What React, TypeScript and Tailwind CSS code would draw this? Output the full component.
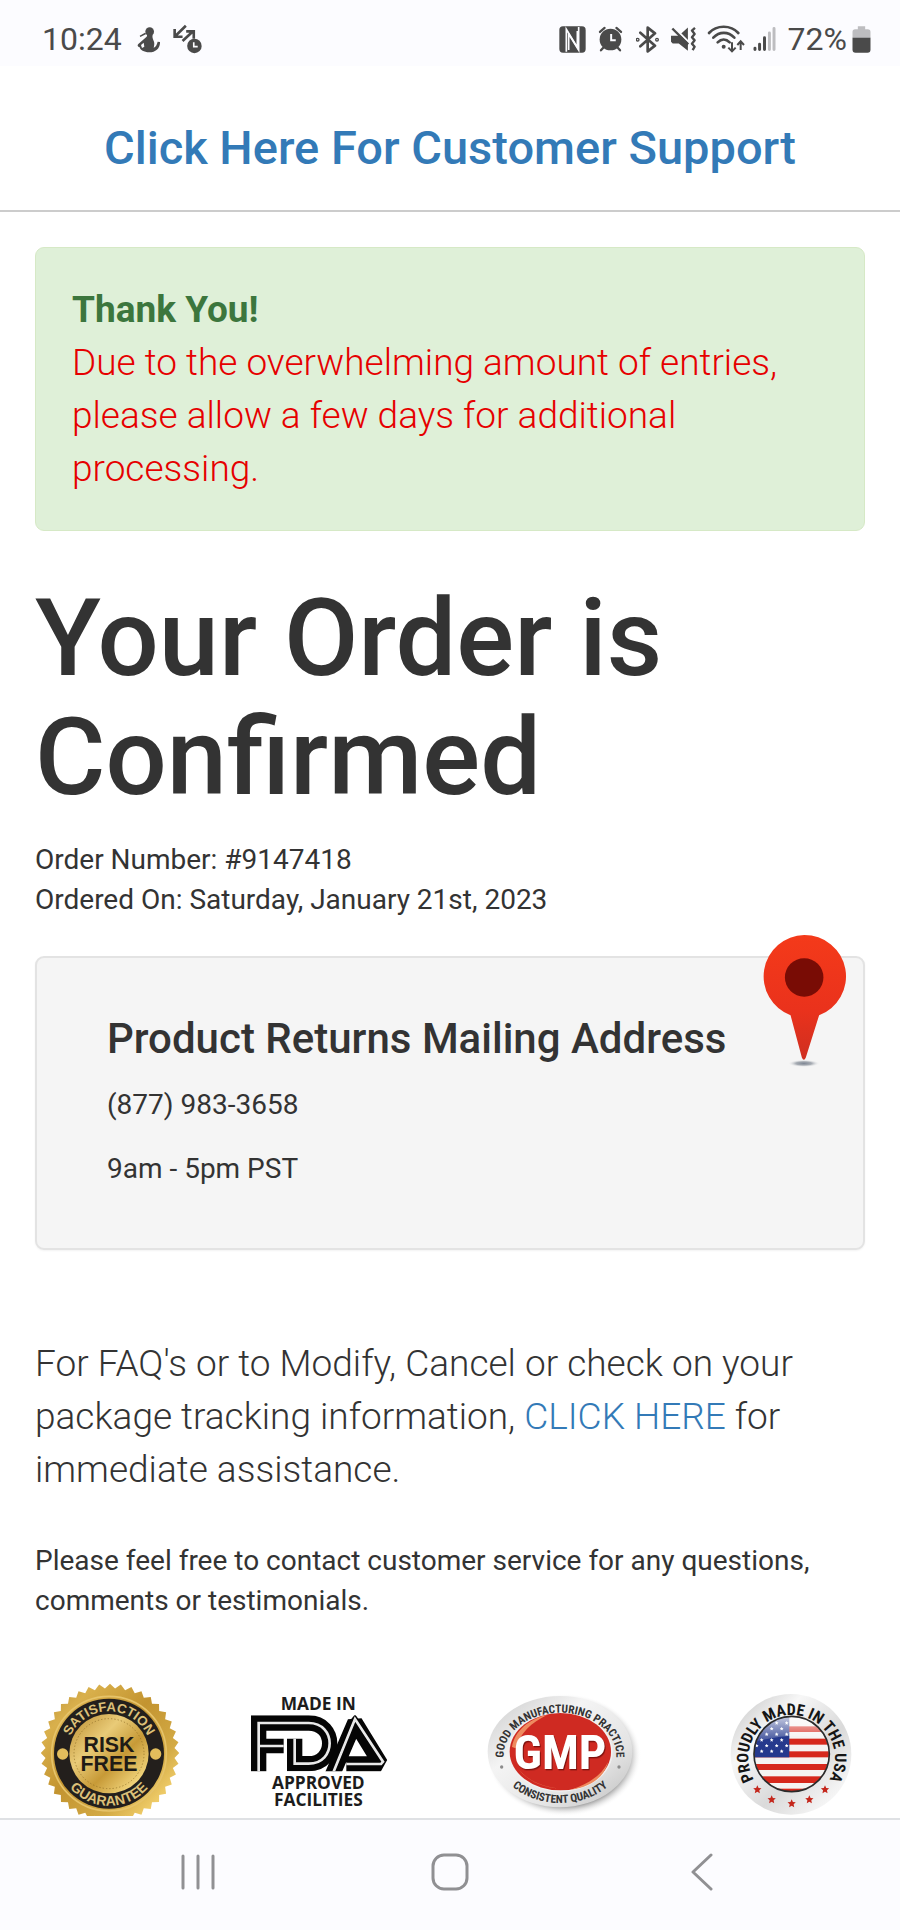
import React from "react";

const narrow = "'Liberation Sans Narrow', 'Roboto Condensed', 'Liberation Sans', sans-serif";
const sans = "'Liberation Sans', sans-serif";

function burst(cx: number, cy: number, outer: number, inner: number, count: number) {
  const points: string[] = [];
  for (let i = 0; i < count * 2; i++) {
    const r = i % 2 === 0 ? outer : inner;
    const a = (Math.PI * i) / count - Math.PI / 2;
    points.push(`${(cx + r * Math.cos(a)).toFixed(1)},${(cy + r * Math.sin(a)).toFixed(1)}`);
  }
  return points.join(" ");
}

function StatusBar() {
  return (
    <div className="flex h-[66px] shrink-0 items-center justify-between bg-[#fcfcff] pt-3 pr-[29px] pl-[42px] text-[#4a4a4a]">
      <div className="flex items-center">
        <span className="text-[32px] leading-8">10:24</span>
        <svg className="ml-[15px] h-[27px] w-[23px]" viewBox="412 77 69 81" fill="currentColor" aria-hidden="true">
          <circle cx="450" cy="94" r="13" />
          <path d="M442 104h17c-2 7 1 12 4 20 2 8 0 14-1 18 6-2 10-9 12-18l7 1c1 17-12 31-32 31-17 0-27-7-29-15-6-2-8-6-4-10l24-21c3-2 2-4 2-6Z" />
          <path d="m420 106 16-9 4 4-18 9Z" />
          <path d="m424 134 8-7 2 12-7 4Z" fill="#fcfcff" />
        </svg>
        <svg className="ml-[13px] h-[30px] w-[29px]" viewBox="520 75 88 90" fill="none" stroke="currentColor" strokeWidth="8" aria-hidden="true">
          <path d="m559 80-31 30M525 90v23h24M549 126l31-29M560 97h23v22" />
          <circle cx="585" cy="141" r="22" fill="currentColor" stroke="none" />
          <path d="M583 130v13h12" stroke="#fcfcff" strokeWidth="5" />
        </svg>
      </div>
      <div className="flex items-center">
        <svg className="h-[27px] w-[27px]" viewBox="55 77 81 81" aria-hidden="true">
          <rect x="56" y="78" width="79" height="79" rx="11" fill="currentColor" />
          <g fill="none" stroke="#fcfcff" strokeWidth="5">
            <path d="M77 154V87l33 54V92" />
            <path d="M114 80v69L84 101v48" />
          </g>
        </svg>
        <svg className="ml-3 h-[26px] w-[25px]" viewBox="173 79 76 77" aria-hidden="true">
          <circle cx="211" cy="119" r="33" fill="currentColor" />
          <path d="m179 96 14-12M243 96l-14-12M189 144l-7 8M233 144l7 8" stroke="currentColor" strokeWidth="7" strokeLinecap="round" />
          <path d="M213 102v19h14" fill="none" stroke="#fcfcff" strokeWidth="6" />
        </svg>
        <svg className="ml-[13px] h-[27px] w-[23px]" viewBox="286 77 69 81" fill="none" stroke="currentColor" strokeWidth="8" strokeLinejoin="round" strokeLinecap="round" aria-hidden="true">
          <path d="m299 97 44 39-22 17V82l22 17-44 39" />
          <circle cx="291" cy="118" r="2" />
          <circle cx="349" cy="118" r="2" />
        </svg>
        <svg className="ml-[11px] h-[26px] w-[27px]" viewBox="390 79 80 76" fill="none" stroke="currentColor" aria-hidden="true">
          <path d="M393 107h23l27-24v69l-27-22h-18l-5-5Z" fill="currentColor" stroke="none" />
          <path d="m398 79 50 50" stroke="#fcfcff" strokeWidth="6" />
          <path d="m397 86 47 47" strokeWidth="7" />
          <path d="m464 84-9 8 8 10-8 10 8 9-8 10 8 9-6 10" strokeWidth="7" strokeLinejoin="round" />
        </svg>
        <svg className="ml-2.5 h-7 w-[38px]" viewBox="500 74 114 84" fill="none" stroke="currentColor" strokeWidth="8" strokeLinecap="round" aria-hidden="true">
          <path d="M506 98c23-25 65-25 88 0M519 112c18-19 45-19 63 0M532 126c11-11 25-11 36 0" />
          <circle cx="550" cy="139" r="6" fill="currentColor" stroke="none" />
          <g strokeWidth="6" strokeLinecap="butt">
            <path d="M575 126v27m-11-11 11 11 11-11M601 149v-26m-10 11 10-11 10 11" />
          </g>
        </svg>
        <svg className="ml-2 h-[26px] w-[23px]" viewBox="636 79 70 76" stroke="currentColor" strokeWidth="9" strokeLinecap="round" aria-hidden="true">
          <path d="M642 149v-4M656 149v-16M671 149v-36" />
          <path d="M686 149V99M700 149V85" stroke="#bdbdc0" />
        </svg>
        <span className="ml-3 text-[32px] leading-8">72%</span>
        <svg className="ml-[5px] h-[27px] w-[19px]" viewBox="935 77 56 81" aria-hidden="true">
          <path d="M952 78h22v9h8q8 0 8 8v18h-54V95q0-8 8-8h8Z" fill="#bdbdc0" />
          <path d="M936 112h54v36q0 9-9 9h-36q-9 0-9-9Z" fill="currentColor" />
        </svg>
      </div>
    </div>
  );
}

function MapPin({ className }: { className?: string }) {
  return (
    <svg className={className} viewBox="186 100 256 402" role="img" aria-label="Map pin">
      <defs>
        <linearGradient id="pin" x1="0" y1="0" x2="0" y2="1">
          <stop offset="0" stopColor="#f43a1a" />
          <stop offset="0.6" stopColor="#ea321c" />
          <stop offset="1" stopColor="#cf2f20" />
        </linearGradient>
        <radialGradient id="pinShadow">
          <stop offset="0" stopColor="#7f8794" />
          <stop offset="0.5" stopColor="#a8adb4" />
          <stop offset="1" stopColor="#f5f5f5" stopOpacity="0" />
        </radialGradient>
      </defs>
      <ellipse cx="312" cy="489" rx="48" ry="11" fill="url(#pinShadow)" />
      <path d="M313 102a125 125 0 0 1 45 242l-40 127q-6 14-12 0l-34-127a125 125 0 0 1 41-242Z" fill="url(#pin)" />
      <circle cx="313" cy="230" r="58" fill="#790c05" />
    </svg>
  );
}

function RiskFreeSeal() {
  return (
    <svg className="h-[140px] w-[138px]" viewBox="124 40 414 420" role="img" aria-label="Risk free, satisfaction guarantee">
      <defs>
        <linearGradient id="gold" x1="0" y1="0" x2="1" y2="1">
          <stop offset="0" stopColor="#b58a35" />
          <stop offset="0.2" stopColor="#d9b04c" />
          <stop offset="0.45" stopColor="#c39430" />
          <stop offset="0.7" stopColor="#d3aa45" />
          <stop offset="0.85" stopColor="#f0cd6a" />
          <stop offset="1" stopColor="#b98d2d" />
        </linearGradient>
        <linearGradient id="goldCore" x1="0" y1="0" x2="1" y2="1">
          <stop offset="0" stopColor="#b98a2c" />
          <stop offset="0.35" stopColor="#e9cb78" />
          <stop offset="0.6" stopColor="#c79a37" />
          <stop offset="0.85" stopColor="#f0d37a" />
          <stop offset="1" stopColor="#b4862a" />
        </linearGradient>
        <path id="sealTop" d="M201 252a127 127 0 0 1 254 0" />
        <path id="sealBottom" d="M172 252a156 156 0 0 0 312 0" />
      </defs>
      <polygon points={burst(331, 250, 208, 194, 40)} fill="url(#gold)" />
      <circle cx="328" cy="252" r="172" fill="none" stroke="#e6c369" strokeWidth="5" />
      <circle cx="328" cy="252" r="165" fill="#231f1c" />
      <circle cx="328" cy="252" r="119" fill="url(#goldCore)" />
      <circle cx="328" cy="252" r="105" fill="none" stroke="#8a6a22" strokeWidth="2" strokeDasharray="4 6" />
      <circle cx="189" cy="253" r="17" fill="#e2bd5c" />
      <circle cx="468" cy="253" r="17" fill="#e2bd5c" />
      <g fontFamily={sans} fontWeight="700" textAnchor="middle">
        <g fill="#dcc078">
          <text fontSize="40"><textPath href="#sealTop" startOffset="50%">SATISFACTION</textPath></text>
          <text fontSize="42"><textPath href="#sealBottom" startOffset="50%">GUARANTEE</textPath></text>
        </g>
        <g fontSize="64" fill="#1f1b16">
          <text x="328" y="247">RISK</text>
          <text x="328" y="303">FREE</text>
        </g>
      </g>
    </svg>
  );
}

function FdaBadge() {
  return (
    <svg className="h-[140px] w-[166px]" viewBox="88 40 498 420" role="img" aria-label="Made in FDA approved facilities">
      <defs>
        <clipPath id="fdaClip"><rect x="88" y="137" width="416" height="168" /></clipPath>
      </defs>
      <g fontFamily="'Open Sans', sans-serif" fontWeight="700" fontSize="52" fill="#1c1c1c" textAnchor="middle">
        <text x="293" y="120">MADE IN</text>
        <text x="293" y="359">APPROVED</text>
        <text x="293" y="410">FACILITIES</text>
      </g>
      <g clipPath="url(#fdaClip)" fill="none">
        <g stroke="#050505" strokeWidth="46">
          <path d="M114 306V160h150c84 0 84 122 0 122h-42v-75" />
          <path d="M114 229h75" strokeWidth="44" />
          <path d="m334 318 69-160 77 125H377" strokeLinejoin="bevel" />
          <path d="m390 150 13-16 12 16Z" fill="#050505" stroke="none" />
        </g>
        <g stroke="#e9e9e9" strokeWidth="8">
          <path d="M114 306V160h150c84 0 84 122 0 122h-42v-75" />
          <path d="M114 229h75" />
          <path d="m334 318 69-170 84 128-6 7H377" />
        </g>
      </g>
    </svg>
  );
}

function GmpBadge() {
  return (
    <svg className="h-[140px] w-[156px]" viewBox="78 40 468 420" role="img" aria-label="GMP, good manufacturing practice, consistent quality">
      <defs>
        <linearGradient id="silver" x1="0" y1="0" x2="1" y2="1">
          <stop offset="0" stopColor="#c9c9c9" />
          <stop offset="0.35" stopColor="#f4f4f4" />
          <stop offset="0.7" stopColor="#e4e4e4" />
          <stop offset="1" stopColor="#bdbdbd" />
        </linearGradient>
        <radialGradient id="gmpShadow">
          <stop offset="0.82" stopColor="#8d8d8d" />
          <stop offset="1" stopColor="#ffffff" stopOpacity="0" />
        </radialGradient>
        <path id="gmpTop" d="M128 258a169 129 0 0 1 338 0" />
        <path id="gmpBottom" d="M102 246a195 154 0 0 0 390 0" />
      </defs>
      <ellipse cx="309" cy="256" rx="232" ry="184" fill="url(#gmpShadow)" />
      <ellipse cx="297" cy="246" rx="217" ry="167" fill="url(#silver)" />
      <ellipse cx="298" cy="246" rx="157" ry="120" fill="#f1f1f1" />
      <ellipse cx="298" cy="246" rx="152" ry="116" fill="#cf2a22" />
      <path d="M153 232c8-48 50-84 105-96-46 22-82 55-94 100ZM163 285c28 42 73 68 140 72-62-3-110-25-140-72ZM330 360c58-8 97-34 112-84-20 40-58 66-112 84Z" fill="#ee8a5f" />
      <g fontFamily={narrow} fontWeight="700" textAnchor="middle" fill="#333333" fontSize="34">
        <text><textPath href="#gmpTop" startOffset="50%">GOOD MANUFACTURING PRACTICE</textPath></text>
        <text><textPath href="#gmpBottom" startOffset="50%">CONSISTENT QUALITY</textPath></text>
        <text x="297" y="298" fontSize="146" fill="#ffffff" className="drop-shadow-[3px_4px_1px_#7e120e]">GMP</text>
      </g>
      <circle cx="122" cy="292" r="5" fill="#8c8c8c" />
      <circle cx="474" cy="292" r="5" fill="#8c8c8c" />
    </svg>
  );
}

const rimStars = [[172, 360], [215, 390], [275, 402], [328, 390], [375, 360]];

function star(cx: number, cy: number, r: number) {
  return burst(cx, cy, r, r * 0.48, 5);
}

function UsaBadge() {
  const cantonStars: number[][] = [];
  for (let row = 0; row < 6; row++) {
    for (let col = 0; col < 4; col++) {
      cantonStars.push([170 + col * 30 + (row % 2) * 15, 160 + row * 17]);
    }
  }
  return (
    <svg className="h-[140px] w-[138px]" viewBox="42 40 414 420" role="img" aria-label="Proudly made in the USA">
      <defs>
        <linearGradient id="rim" x1="0" y1="0" x2="1" y2="1">
          <stop offset="0" stopColor="#bfbfbf" />
          <stop offset="0.3" stopColor="#f7f7f7" />
          <stop offset="0.6" stopColor="#dadada" />
          <stop offset="0.85" stopColor="#f5f5f5" />
          <stop offset="1" stopColor="#c8c8c8" />
        </linearGradient>
        <linearGradient id="gloss" x1="0" y1="0" x2="0" y2="1">
          <stop offset="0" stopColor="#ffffff" stopOpacity="0.75" />
          <stop offset="1" stopColor="#ffffff" stopOpacity="0.1" />
        </linearGradient>
        <clipPath id="flagClip"><circle cx="275" cy="253" r="112" /></clipPath>
        <path id="usaText" d="M165 335A130 130 0 1 1 385 335" />
      </defs>
      <circle cx="273" cy="254" r="181" fill="url(#rim)" />
      <g clipPath="url(#flagClip)">
        <rect x="160" y="138" width="230" height="230" fill="#f5f3f1" />
        <g fill="#d6281c">
          <rect x="160" y="170" width="230" height="17" />
          <rect x="160" y="207" width="230" height="18" />
          <rect x="160" y="245" width="230" height="18" />
          <rect x="160" y="283" width="230" height="18" />
          <rect x="160" y="320" width="230" height="20" />
          <rect x="160" y="357" width="230" height="12" />
        </g>
        <rect x="160" y="138" width="108" height="125" fill="#25398d" />
        {cantonStars.filter(([x]) => x < 264).map(([x, y]) => (
          <polygon key={`${x}-${y}`} points={star(x, y, 6)} fill="#ffffff" />
        ))}
        <path d="M160 138h230v70q-115-24-230 10Z" fill="url(#gloss)" />
      </g>
      <circle cx="275" cy="253" r="113" fill="none" stroke="#2a2a2a" strokeWidth="5" />
      <text fontFamily={narrow} fontWeight="700" fontSize="48" fill="#151515" textAnchor="middle">
        <textPath href="#usaText" startOffset="50%">PROUDLY MADE IN THE USA</textPath>
      </text>
      {rimStars.map(([x, y]) => (
        <polygon key={x} points={star(x, y, 13)} fill="#c4271c" />
      ))}
    </svg>
  );
}

function NavBar() {
  const button = "flex flex-1 items-center justify-center";
  return (
    <nav className="flex h-[112px] shrink-0 border-t-2 border-[#dfe1e4] bg-[#fcfcff] px-[72px] pb-1.5 text-[#909093]">
      <button type="button" aria-label="Recent apps" className={button}>
        <svg className="h-9 w-9" viewBox="0 0 36 36" stroke="currentColor" strokeWidth="3" strokeLinecap="round">
          <path d="M3 2v32M18 2v32M33 2v32" />
        </svg>
      </button>
      <button type="button" aria-label="Home" className={button}>
        <svg className="h-[38px] w-[38px]" viewBox="0 0 38 38" fill="none" stroke="currentColor" strokeWidth="3">
          <rect x="2" y="2" width="34" height="34" rx="11" />
        </svg>
      </button>
      <button type="button" aria-label="Back" className={button}>
        <svg className="h-[38px] w-[22px]" viewBox="0 0 22 38" fill="none" stroke="currentColor" strokeWidth="3" strokeLinecap="round" strokeLinejoin="round">
          <path d="M20 2 2 19l18 17" />
        </svg>
      </button>
    </nav>
  );
}

export default function App() {
  return (
    <div className="flex min-h-screen flex-col bg-white font-['Roboto',sans-serif] text-[#333333]">
      <StatusBar />
      <header className="flex h-[146px] items-center justify-center border-b-2 border-[#cccccc] pt-5">
        <a href="#support" className="text-[47px] leading-[50px] font-medium text-[#337ab7]">
          Click Here For Customer Support
        </a>
      </header>
      <main className="flex flex-1 flex-col px-[35px]">
        <div role="alert" className="mt-[35px] rounded-[9px] border border-[#d6e9c6] bg-[#dff0d8] px-9 py-[35px] text-[37px] leading-[53px]">
          <strong className="block font-bold text-[#3c763d]">Thank You!</strong>
          <p className="font-light text-[#e60000]">
            Due to the overwhelming amount of entries, please allow a few days for additional processing.
          </p>
        </div>
        <h1 className="mt-12 text-[108px] leading-[119px] font-medium">Your Order is Confirmed</h1>
        <div className="mt-[23px] text-[28px] leading-10">
          <p>Order Number: #9147418</p>
          <p>Ordered On: Saturday, January 21st, 2023</p>
        </div>
        <section className="relative mt-9 rounded-[9px] border-2 border-[#e3e3e3] bg-[#f5f5f5] px-[70px] pt-14 pb-[59px] shadow-xs">
          <MapPin className="absolute -top-6 right-4 h-[134px] w-[85px]" />
          <h2 className="text-[42px] leading-[50px] font-medium">Product Returns Mailing Address</h2>
          <p className="mt-[21px] text-[28px] leading-10">(877) 983-3658</p>
          <p className="mt-6 text-[28px] leading-10">9am - 5pm PST</p>
        </section>
        <p className="mt-[87px] text-[37px] leading-[53px] font-light">
          For FAQ's or to Modify, Cancel or check on your package tracking information,{" "}
          <a href="#tracking" className="text-[#337ab7]">CLICK HERE</a> for immediate assistance.
        </p>
        <p className="mt-[45px] text-[28px] leading-10">
          Please feel free to contact customer service for any questions, comments or testimonials.
        </p>
        <div className="mt-[62px] flex h-[133px] items-start justify-between overflow-hidden pr-[13px] pl-[6px]">
          <RiskFreeSeal />
          <FdaBadge />
          <GmpBadge />
          <UsaBadge />
        </div>
      </main>
      <NavBar />
    </div>
  );
}
